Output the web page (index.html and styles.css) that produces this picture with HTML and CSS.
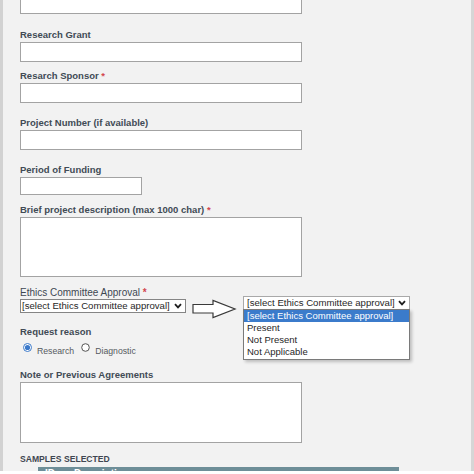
FILE: index.html
```html
<!DOCTYPE html>
<html lang="en">
<head>
<meta charset="utf-8">
<title>Request form</title>
<link rel="stylesheet" href="styles.css">
</head>
<body>
<div class="page">
  <form class="form">
    <input class="text-input first" type="text">

    <label class="label mt-15">Research Grant</label>
    <input class="text-input" type="text">

    <label class="label mt-8">Resarch Sponsor <span class="req">*</span></label>
    <input class="text-input" type="text">

    <label class="label mt-14">Project Number (if available)</label>
    <input class="text-input" type="text">

    <label class="label mt-14">Period of Funding</label>
    <input class="text-input short" type="text">

    <label class="label mt-9">Brief project description (max 1000 char) <span class="req">*</span></label>
    <textarea class="text-area"></textarea>

    <label class="label label-plain mt-10">Ethics Committee Approval <span class="req">*</span></label>
    <div class="ethics-row">
      <div class="select select-left">
        <span class="select-text">[select Ethics Committee approval]</span>
        <svg class="chevron" width="8" height="6" viewBox="0 0 8 6"><polyline points="1,1.2 4,4.4 7,1.2" fill="none" stroke="#1e1e1e" stroke-width="1.8"/></svg>
      </div>
      <svg class="arrow" width="46" height="20" viewBox="0 0 46 20">
        <path d="M2 5.5 H22 V1.5 L44 10 L22 18.5 V14 H2 Z" fill="#ffffff" stroke="#3a3a3a" stroke-width="1.2" stroke-linejoin="miter"/>
      </svg>
      <div class="combo">
        <div class="select select-right">
          <span class="select-text">[select Ethics Committee approval]</span>
          <svg class="chevron" width="8" height="6" viewBox="0 0 8 6"><polyline points="1,1.2 4,4.4 7,1.2" fill="none" stroke="#1e1e1e" stroke-width="1.8"/></svg>
        </div>
        <ul class="options">
          <li class="option active">[select Ethics Committee approval]</li>
          <li class="option">Present</li>
          <li class="option">Not Present</li>
          <li class="option">Not Applicable</li>
        </ul>
      </div>
    </div>

    <div class="label mt-7">Request reason</div>
    <div class="radios">
      <span class="radio-item">
        <svg class="radio" width="9" height="9" viewBox="0 0 9 9"><circle cx="4.5" cy="4.5" r="4" fill="#ffffff" stroke="#3a78c9" stroke-width="1"/><circle cx="4.5" cy="4.5" r="2.6" fill="#3a78c9"/></svg>
        <span class="radio-text">Research</span>
      </span>
      <span class="radio-item">
        <svg class="radio" width="9" height="9" viewBox="0 0 9 9"><circle cx="4.5" cy="4.5" r="3.8" fill="#ffffff" stroke="#555555" stroke-width="1"/></svg>
        <span class="radio-text">Diagnostic</span>
      </span>
    </div>

    <label class="label mt-11">Note or Previous Agreements</label>
    <textarea class="text-area note"></textarea>

    <div class="section-title">SAMPLES SELECTED</div>
    <div class="table">
      <div class="thead">
        <span class="th">ID</span>
        <span class="th">Description</span>
      </div>
    </div>
  </form>
</div>
</body>
</html>
```

FILE: styles.css
```css
html, body {
  margin: 0;
  padding: 0;
  background: #ffffff;
}

body {
  font-family: "Liberation Sans", Arial, sans-serif;
}

.page {
  box-sizing: border-box;
  width: 474px;
  height: 471px;
  overflow: hidden;
  background: #f2f2f2;
  border-left: 3px solid #d2d2d2;
  border-right: 3px solid #d6d6d6;
  padding-left: 17px;
}

.form {
  margin: 0;
  display: block;
}

.label {
  display: block;
  font-size: 9.5px;
  line-height: 12px;
  font-weight: bold;
  color: #414b55;
  margin-bottom: 1px;
}

.label-plain {
  font-weight: normal;
  font-size: 10px;
  color: #3e4852;
  margin-bottom: 0;
}

.req {
  color: #d2474e;
  font-weight: bold;
}

.mt-7 { margin-top: 7px; }
.mt-8 { margin-top: 8px; }
.mt-9 { margin-top: 9px; }
.mt-10 { margin-top: 10px; }
.mt-11 { margin-top: 11px; }
.mt-14 { margin-top: 14px; }
.mt-15 { margin-top: 15px; }

.text-input,
.text-area {
  display: block;
  box-sizing: border-box;
  width: 282px;
  height: 20px;
  margin: 0;
  padding: 0;
  border: 1px solid #a3a3a3;
  background: #ffffff;
  outline: none;
  font-family: inherit;
}

.text-input.first {
  margin-top: -6px;
}

.text-input.short {
  width: 122px;
  height: 18px;
}

.text-area {
  height: 60px;
  resize: none;
}

.text-area.note {
  height: 61px;
}

/* Ethics committee row */
.ethics-row {
  position: relative;
  display: flex;
  align-items: flex-start;
}

.select {
  box-sizing: border-box;
  display: flex;
  align-items: center;
  justify-content: space-between;
  background: #ffffff;
  font-size: 9.6px;
  line-height: 12px;
  color: #1f1f1f;
}

.select-left {
  width: 166px;
  height: 14px;
  border: 1px solid #858585;
  padding: 0 3px 0 1px;
}

.arrow {
  display: block;
  margin-left: 5px;
}

.combo {
  position: absolute;
  left: 223px;
  top: -3px;
  width: 167px;
}

.select-right {
  width: 167px;
  height: 14px;
  border: 1px solid #a9a9a9;
  padding: 0 3px 0 3px;
}

.chevron {
  display: block;
  flex: none;
}

.options {
  list-style: none;
  margin: -1px 0 0 0;
  padding: 0 0 1px 0;
  border: 1px solid #7a7a7a;
  background: #ffffff;
  box-shadow: 2px 2px 3px rgba(0, 0, 0, 0.22);
}

.option {
  height: 12px;
  line-height: 12px;
  font-size: 9.5px;
  color: #1f1f1f;
  padding-left: 3px;
  white-space: nowrap;
}

.option.active {
  background: #3b7bcb;
  color: #ffffff;
}

/* Radios */
.radios {
  display: flex;
  align-items: flex-start;
  margin-top: 4px;
  padding-left: 3px;
  gap: 7px;
}

.radio-item {
  display: flex;
  align-items: flex-start;
  gap: 5px;
}

.radio {
  display: block;
  margin-top: 1px;
}

.radio-text {
  font-size: 8.7px;
  line-height: 13px;
  padding-top: 2.5px;
  color: #555a60;
}

/* Samples table */
.section-title {
  margin-top: 10px;
  font-size: 8.6px;
  line-height: 12px;
  font-weight: bold;
  color: #3f4650;
}

.table {
  margin-top: 2px;
  margin-left: 18px;
  width: 361px;
}

.thead {
  display: grid;
  grid-template-columns: 29px 1fr;
  height: 16px;
  background: #6e8e98;
}

.th {
  padding-left: 7px;
  font-size: 10px;
  line-height: 13px;
  font-weight: bold;
  color: #ffffff;
}
```
